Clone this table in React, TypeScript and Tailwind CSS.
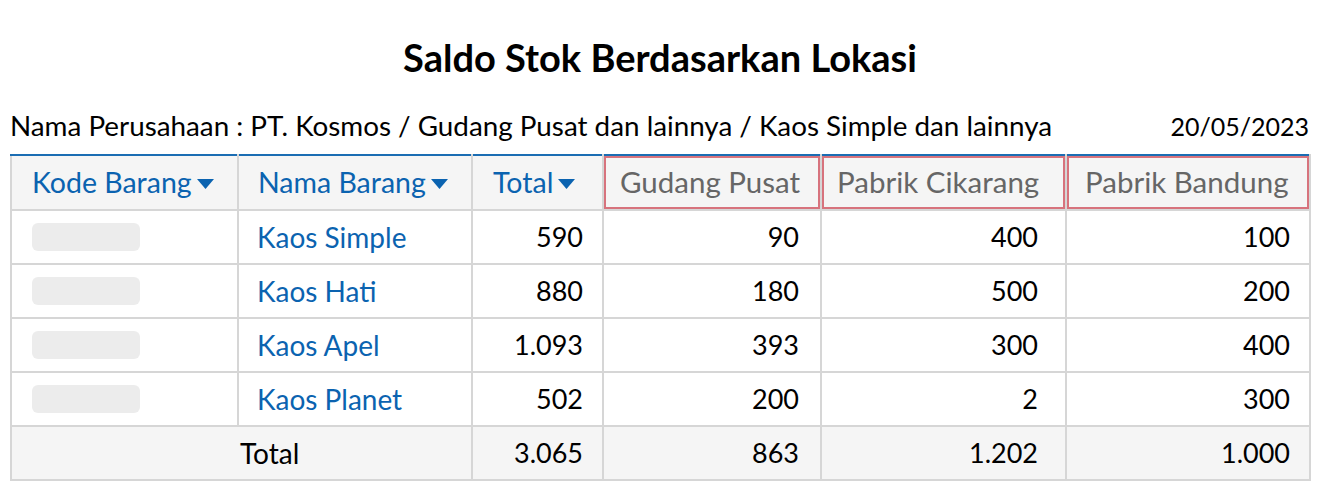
import React from "react";

const rows = [
  { name: "Kaos Simple", total: "590", a: "90", b: "400", c: "100" },
  { name: "Kaos Hati", total: "880", a: "180", b: "500", c: "200" },
  { name: "Kaos Apel", total: "1.093", a: "393", b: "300", c: "400" },
  { name: "Kaos Planet", total: "502", a: "200", b: "2", c: "300" },
];

function Caret() {
  return (
    <svg width="17" height="10" viewBox="0 0 17 10" className="inline-block ml-[5px] mb-[4px]">
      <path d="M0 0 L17 0 L8.5 10 Z" fill="#0b63b0" />
    </svg>
  );
}

const th = "border-2 border-[#d6d6d6] border-t-[#1b6db3] text-left font-normal whitespace-nowrap";
const loc = "text-[29.5px] text-[#666666] shadow-[inset_0_0_0_2px_#d7737d]";
const td = "border-2 border-[#d6d6d6] text-right text-[27px]";

export default function App() {
  const font = { fontFamily: 'Lato, "Liberation Sans", sans-serif' };
  return (
    <div className="w-[1320px] h-[492px] bg-white text-black" style={font}>
      <h1 className="pt-[34px] text-center text-[38px] leading-[46px] font-bold">Saldo Stok Berdasarkan Lokasi</h1>
      <div className="mx-[10px] mt-[30px] flex justify-between items-center text-[27.8px] leading-[32px]">
        <span>Nama Perusahaan : PT. Kosmos / Gudang Pusat dan lainnya / Kaos Simple dan lainnya</span>
        <span className="mr-[1px] text-[25px]">20/05/2023</span>
      </div>
      <table className="ml-[10px] mt-[12px] border-collapse text-[28px]">
        <colgroup>
          <col className="w-[227px]" />
          <col className="w-[234px]" />
          <col className="w-[131px]" />
          <col className="w-[218px]" />
          <col className="w-[245px]" />
          <col className="w-[244px]" />
        </colgroup>
        <thead>
          <tr className="h-[55px] bg-[#f5f5f5]">
            <th className={`${th} px-[20px] text-[28.5px] text-[#0b63b0]`}>Kode Barang<Caret /></th>
            <th className={`${th} px-[19px] text-[28.5px] text-[#0b63b0]`}>Nama Barang<Caret /></th>
            <th className={`${th} px-[20px] text-[28.5px] text-[#0b63b0]`}>Total<Caret /></th>
            <th className={`${th} px-[16px] ${loc}`}>Gudang Pusat</th>
            <th className={`${th} px-[15px] ${loc}`}>Pabrik Cikarang</th>
            <th className={`${th} px-[18px] ${loc}`}>Pabrik Bandung</th>
          </tr>
        </thead>
        <tbody>
          {rows.map((r) => (
            <tr key={r.name} className="h-[54px]">
              <td className="border-2 border-[#d6d6d6] px-[20px]">
                <div className="w-[108px] h-[28px] rounded-[6px] bg-[#ececec]" />
              </td>
              <td className="border-2 border-[#d6d6d6] px-[18px] text-[#0b63b0]">{r.name}</td>
              <td className={`${td} px-[19px]`}>{r.total}</td>
              <td className={`${td} px-[21px]`}>{r.a}</td>
              <td className={`${td} px-[27px]`}>{r.b}</td>
              <td className={`${td} px-[19px]`}>{r.c}</td>
            </tr>
          ))}
          <tr className="h-[54px] bg-[#f5f5f5]">
            <td colSpan={2} className="border-2 border-[#d6d6d6] text-left pl-[228px]">Total</td>
            <td className={`${td} px-[19px]`}>3.065</td>
            <td className={`${td} px-[21px]`}>863</td>
            <td className={`${td} px-[27px]`}>1.202</td>
            <td className={`${td} px-[19px]`}>1.000</td>
          </tr>
        </tbody>
      </table>
    </div>
  );
}
